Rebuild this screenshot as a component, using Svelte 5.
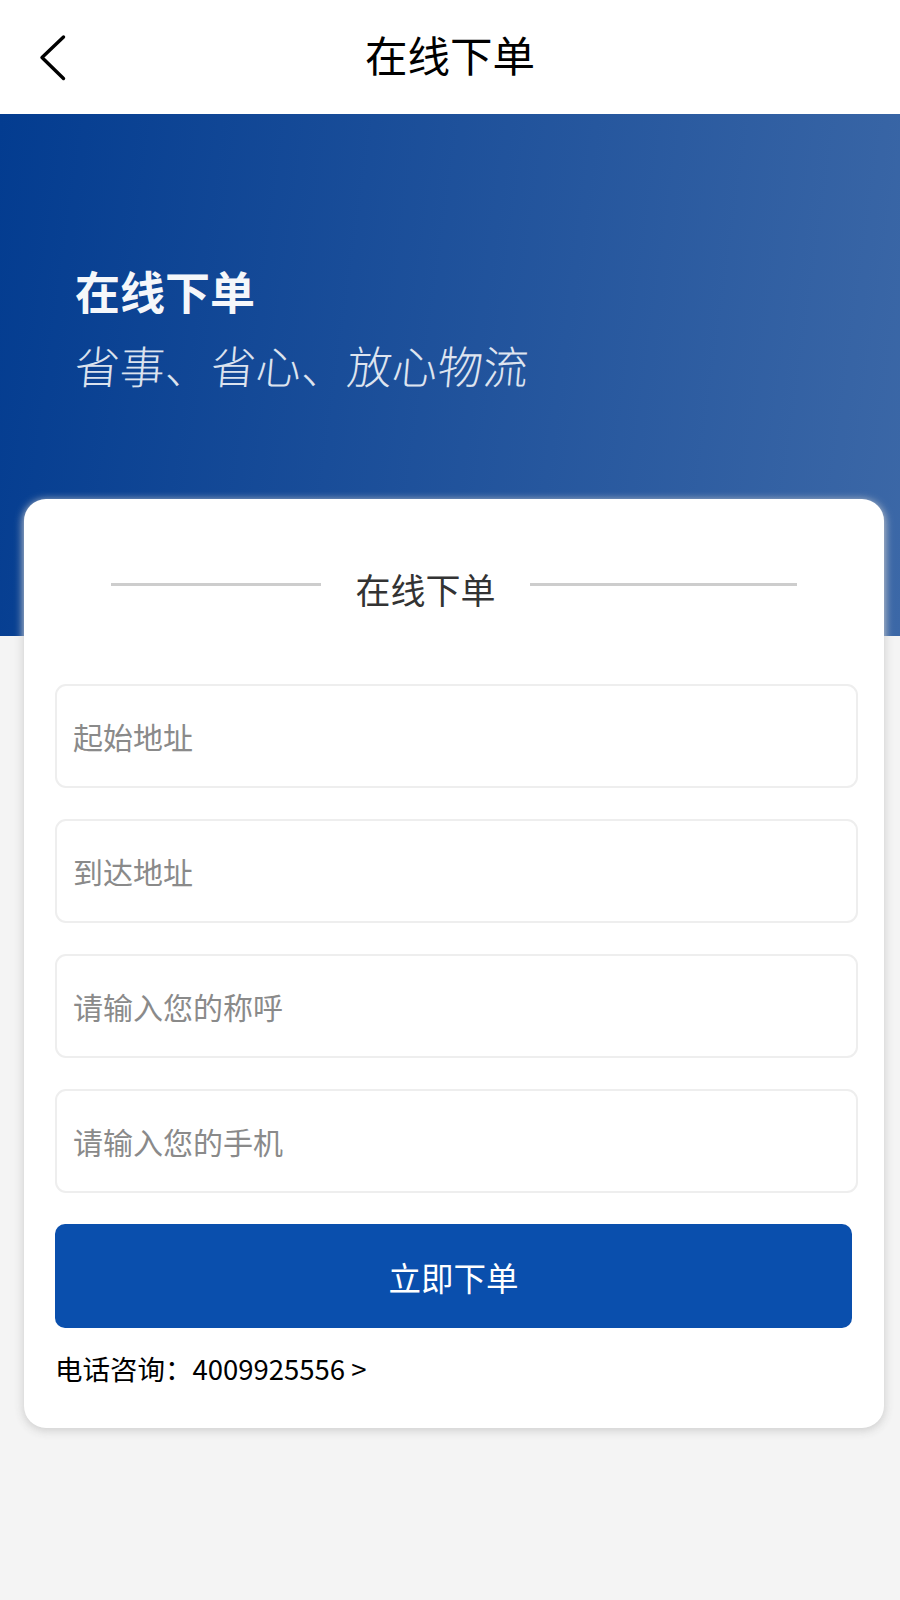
<script>
  let fields = ['起始地址', '到达地址', '请输入您的称呼', '请输入您的手机'];
</script>

<div class="page">
  <header class="nav">
    <button class="back" aria-label="返回">
      <svg width="30" height="50" viewBox="0 0 30 50">
        <path d="M25.5 4 L4 24.5 L25.5 45.5" fill="none" stroke="#000" stroke-width="3.4" stroke-linecap="round" stroke-linejoin="round" />
      </svg>
    </button>
    <h1>在线下单</h1>
  </header>

  <section class="hero">
    <div class="hero-title">在线下单</div>
    <div class="hero-sub">省事、省心、放心物流</div>
  </section>

  <div class="card">
    <div class="card-head">
      <span class="line left"></span>
      <span class="card-title">在线下单</span>
      <span class="line right"></span>
    </div>

    <form class="fields" on:submit|preventDefault>
      {#each fields as placeholder}
        <input type="text" {placeholder} />
      {/each}
      <button class="submit" type="submit">立即下单</button>
    </form>

    <div class="phone">电话咨询：4009925556 &gt;</div>
  </div>
</div>

<style>
  :global(body) {
    background: #f4f4f4;
    font-family: "Noto Sans CJK SC", "Noto Sans", sans-serif;
  }

  .page {
    min-height: 1600px;
    background: #f4f4f4;
    overflow: hidden;
  }

  .nav {
    height: 114px;
    background: #fff;
    display: flex;
    align-items: center;
    justify-content: center;
    position: relative;
  }

  .nav h1 {
    margin: -5px 0 0;
    font-size: 42.5px;
    font-weight: 400;
    color: #000;
    line-height: 1;
  }

  .back {
    position: absolute;
    left: 38px;
    top: 33px;
    padding: 0;
    border: none;
    background: none;
    line-height: 0;
  }

  .hero {
    height: 522px;
    box-sizing: border-box;
    padding: 144px 0 0 75px;
    background: linear-gradient(98deg, #033c90 0%, #3c68a7 100%);
    color: #fff;
  }

  .hero-title {
    font-size: 45px;
    font-weight: 700;
    line-height: 66px;
    opacity: 0.96;
  }

  .hero-sub {
    margin: 8px 0 0 -3px;
    font-size: 45px;
    font-weight: 300;
    letter-spacing: 0.4px;
    line-height: 66px;
    opacity: 0.85;
    transform: skewX(-5deg);
    transform-origin: left bottom;
  }

  .card {
    margin: -137px 16px 0 24px;
    height: 929px;
    box-sizing: border-box;
    padding: 0 26px 0 31px;
    background: #fff;
    border-radius: 22px;
    box-shadow: 0 2px 9px 1px rgba(205, 205, 205, 0.95);
  }

  .card-head {
    height: 185px;
    display: flex;
    align-items: flex-start;
    padding: 66px 0 0 56px;
    box-sizing: border-box;
  }

  .line {
    height: 2.5px;
    margin-top: 18px;
    background: #cdcdcd;
  }

  .line.left {
    width: 210px;
  }

  .line.right {
    width: 267px;
  }

  .card-title {
    width: 209px;
    text-align: center;
    font-size: 35px;
    line-height: 48px;
    color: #333;
  }

  .fields {
    display: flex;
    flex-direction: column;
    align-items: flex-start;
    gap: 31px;
  }

  input {
    width: 803px;
    height: 104px;
    box-sizing: border-box;
    padding: 0 16px;
    border: 2.5px solid #eee;
    border-radius: 11px;
    background: #fff;
    font-family: inherit;
    font-size: 30px;
    color: #333;
    outline: none;
  }

  input::placeholder {
    color: #8a8a8a;
    opacity: 1;
  }

  .submit {
    width: 797px;
    height: 104px;
    border: none;
    border-radius: 10px;
    background: #0a4fad;
    color: #fff;
    font-family: inherit;
    font-size: 32.5px;
  }

  .phone {
    margin: 20px 0 0;
    font-size: 27.5px;
    line-height: 40px;
    color: #000;
  }
</style>
